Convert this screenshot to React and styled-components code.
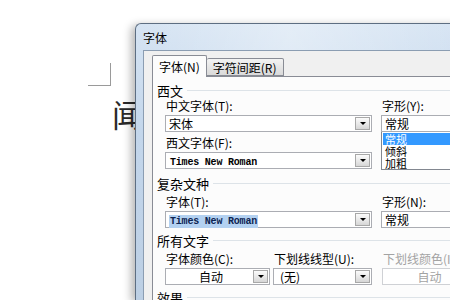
import React from 'react'
import styled, { createGlobalStyle } from 'styled-components'

const CJK = `"Noto Sans CJK SC", "Liberation Sans", sans-serif`
const BORDER = '#abadb3'
const TAB_BORDER = '#898c95'

const GlobalStyle = createGlobalStyle`
  html, body {
    margin: 0;
    padding: 0;
    background: #fff;
  }
  body {
    font-family: ${CJK};
    font-size: 12px;
    color: #000;
  }
`

const Page = styled.div`
  width: 450px;
  height: 300px;
  display: flex;
  overflow: hidden;
  background: #fff;
`
const DocArea = styled.div`
  width: 135px;
  flex-shrink: 0;
  overflow: hidden;
`
const CornerMark = styled.div`
  width: 22px;
  height: 22px;
  margin: 63px 0 0 88px;
  border-right: 1px solid #9a9a9a;
  border-bottom: 1px solid #9a9a9a;
`
const DocChar = styled.div`
  margin: 11px 0 0 112px;
  width: 40px;
  font-size: 31px;
  line-height: 34px;
  color: #2a2a2a;
  white-space: nowrap;
`
const Dialog = styled.div`
  flex: 1;
  min-width: 330px;
  margin-top: 23px;
  display: flex;
  flex-direction: column;
  overflow: hidden;
  border: 1px solid #5d6e82;
  border-right: none;
  border-bottom: none;
  border-radius: 6px 0 0 0;
  background: linear-gradient(180deg, #d6e4f3 0%, #c3d6eb 40%, #bccfe4 100%);
  box-shadow: -4px 2px 8px rgba(0, 0, 0, 0.28);
  padding-left: 7px;
`
const TitleBar = styled.div`
  height: 26px;
  flex-shrink: 0;
  display: flex;
  align-items: center;
  font-size: 12px;
  background: linear-gradient(90deg, rgba(255,255,255,0) 0%, rgba(255,255,255,0.35) 45%, rgba(255,255,255,0) 100%);
`
const Client = styled.div`
  flex: 1;
  min-height: 0;
  background: #f0f0f0;
  border-left: 1px solid #8b9db2;
  border-top: 1px solid #8b9db2;
  padding: 4px 0 0 8px;
  display: flex;
  flex-direction: column;
`
const TabStrip = styled.div`
  display: flex;
  flex-shrink: 0;
  align-items: flex-end;
  height: 21px;
`
const Tab = styled.div`
  position: relative;
  z-index: ${p => (p.$active ? 1 : 0)};
  height: ${p => (p.$active ? 21 : 16)}px;
  padding: 0 6px;
  display: flex;
  align-items: center;
  font-size: 12px;
  border: 1px solid ${TAB_BORDER};
  border-bottom: ${p => (p.$active ? 'none' : `1px solid ${TAB_BORDER}`)};
  border-left: ${p => (p.$active ? `1px solid ${TAB_BORDER}` : 'none')};
  margin-bottom: ${p => (p.$active ? -1 : 0)}px;
  background: ${p => (p.$active ? '#fcfcfc' : 'linear-gradient(180deg, #f3f3f3 0%, #e6e6e6 50%, #dadada 100%)')};
  border-radius: 2px 2px 0 0;
`
const Panel = styled.div`
  flex: 1;
  min-height: 0;
  background: #fcfcfc;
  border: 1px solid ${TAB_BORDER};
  border-right: none;
  border-bottom: none;
  padding: 6px 0 0 4px;
`
const Heading = styled.div`
  display: flex;
  align-items: center;
  height: 14px;
  font-size: 13px;
  margin-bottom: ${p => p.$after || 2}px;
  &::after {
    content: '';
    flex: 1;
    margin-left: 4px;
    border-top: 1px solid #dde3e8;
  }
`
const Row = styled.div`
  display: flex;
  margin-left: 8px;
  margin-bottom: ${p => p.$after || 0}px;
`
const Column = styled.div`
  width: ${p => (p.$width ? `${p.$width}px` : 'auto')};
  flex: ${p => (p.$width ? 'none' : 1)};
  margin-right: ${p => p.$gap || 0}px;
  display: flex;
  flex-direction: column;
`
const Label = styled.div`
  height: 14px;
  line-height: 14px;
  font-size: 12px;
  padding-left: 1px;
  margin-bottom: 2px;
  margin-top: ${p => p.$top || 0}px;
  color: ${p => (p.$disabled ? '#a3a3a3' : '#000')};
  white-space: nowrap;
`
const Combo = styled.div`
  height: 17px;
  box-sizing: border-box;
  display: flex;
  align-items: center;
  background: #fff;
  border: 1px solid ${p => (p.$disabled ? '#cfd1d5' : BORDER)};
  border-right: ${p => (p.$open ? 'none' : undefined)};
`
const ComboText = styled.span`
  flex: 1;
  padding-left: ${p => p.$indent || 3}px;
  text-align: ${p => (p.$center ? 'center' : 'left')};
  font-size: 12px;
  line-height: 15px;
  color: ${p => (p.$disabled ? '#a3a3a3' : '#000')};
  white-space: nowrap;
  overflow: hidden;
`
const MonoText = styled.span`
  font-family: "Liberation Mono", monospace;
  font-size: 10px;
  font-weight: bold;
  letter-spacing: -0.2px;
  padding: 1px 1px;
  background: ${p => (p.$selected ? '#b3d1f1' : 'transparent')};
  color: ${p => (p.$selected ? '#0c2452' : '#000')};
`
const DropButton = styled.div`
  width: 13px;
  height: 11px;
  margin-right: 1px;
  border: 1px solid #a8a8a8;
  background: linear-gradient(180deg, #fbfbfb 0%, #e8e8e8 55%, #d6d6d6 100%);
  display: flex;
  align-items: center;
  justify-content: center;
  &::after {
    content: '';
    width: 0;
    height: 0;
    border-left: 3px solid transparent;
    border-right: 3px solid transparent;
    border-top: 3px solid #000;
  }
`
const ListBox = styled.div`
  height: 38px;
  box-sizing: border-box;
  border: 1px solid #828790;
  border-right: none;
  border-top: none;
  background: #fff;
  padding: 1px 0 0 1px;
`
const ListItem = styled.div`
  height: 12px;
  line-height: 12px;
  font-size: 11px;
  overflow: hidden;
  padding-left: 2px;
  background: ${p => (p.$selected ? '#3399ff' : 'transparent')};
  color: ${p => (p.$selected ? '#fff' : '#000')};
`

const ComboBox = ({ children, button = true, ...rest }) => (
  <Combo {...rest}>
    {children}
    {button && <DropButton />}
  </Combo>
)

export default function App() {
  return (
    <>
      <GlobalStyle />
      <Page>
        <DocArea>
          <CornerMark />
          <DocChar>闻</DocChar>
        </DocArea>
        <Dialog>
          <TitleBar>字体</TitleBar>
          <Client>
            <TabStrip>
              <Tab $active>字体(N)</Tab>
              <Tab>字符间距(R)</Tab>
            </TabStrip>
            <Panel>
              <Heading>西文</Heading>
              <Row $after={6}>
                <Column $width={207} $gap={9}>
                  <Label>中文字体(T):</Label>
                  <ComboBox>
                    <ComboText>宋体</ComboText>
                  </ComboBox>
                  <Label $top={4}>西文字体(F):</Label>
                  <ComboBox>
                    <ComboText>
                      <MonoText>Times New Roman</MonoText>
                    </ComboText>
                  </ComboBox>
                </Column>
                <Column>
                  <Label>字形(Y):</Label>
                  <ComboBox button={false} $open>
                    <ComboText>常规</ComboText>
                  </ComboBox>
                  <ListBox>
                    <ListItem $selected>常规</ListItem>
                    <ListItem>倾斜</ListItem>
                    <ListItem>加粗</ListItem>
                  </ListBox>
                </Column>
              </Row>
              <Heading $after={5}>复杂文种</Heading>
              <Row $after={5}>
                <Column $width={207} $gap={9}>
                  <Label>字体(T):</Label>
                  <ComboBox>
                    <ComboText>
                      <MonoText $selected>Times New Roman</MonoText>
                    </ComboText>
                  </ComboBox>
                </Column>
                <Column>
                  <Label>字形(N):</Label>
                  <ComboBox button={false} $open>
                    <ComboText>常规</ComboText>
                  </ComboBox>
                </Column>
              </Row>
              <Heading $after={5}>所有文字</Heading>
              <Row $after={5}>
                <Column $width={105} $gap={3}>
                  <Label>字体颜色(C):</Label>
                  <ComboBox>
                    <ComboText $center>自动</ComboText>
                  </ComboBox>
                </Column>
                <Column $width={99} $gap={10}>
                  <Label>下划线线型(U):</Label>
                  <ComboBox>
                    <ComboText $indent={6}>(无)</ComboText>
                  </ComboBox>
                </Column>
                <Column>
                  <Label $disabled>下划线颜色(I):</Label>
                  <ComboBox button={false} $open $disabled>
                    <ComboText $center $disabled>自动</ComboText>
                  </ComboBox>
                </Column>
              </Row>
              <Heading>效果</Heading>
            </Panel>
          </Client>
        </Dialog>
      </Page>
    </>
  )
}
